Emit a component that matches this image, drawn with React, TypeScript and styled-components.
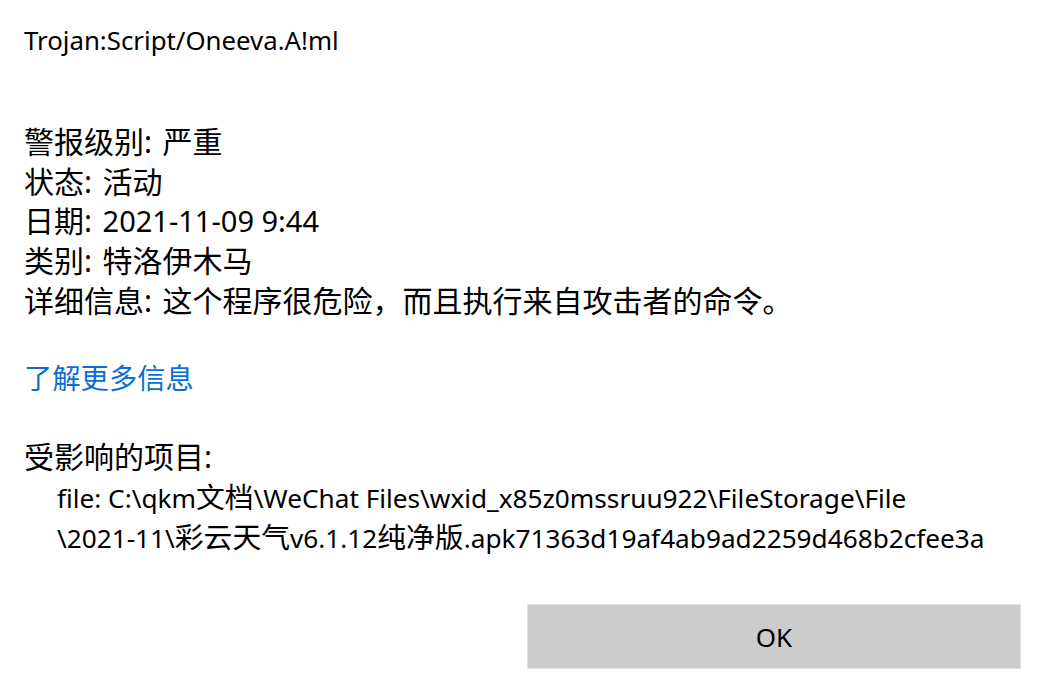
import React from "react";
import styled, { createGlobalStyle } from "styled-components";

const Global = createGlobalStyle`
  html, body { margin: 0; padding: 0; background: #ffffff; }
  body {
    font-family: "Noto Sans", "Noto Sans CJK SC", sans-serif;
    color: #000;
  }
`;

const Dialog = styled.div`
  width: 1047px;
  height: 693px;
  box-sizing: border-box;
  padding: 20px 26px 0 24px;
  display: flex;
  flex-direction: column;
  font-size: 29px;
  line-height: 39.7px;
`;

const Title = styled.div`
  font-family: "Noto Sans", sans-serif;
  font-size: 25.8px;
  line-height: 40px;
`;

const Section = styled.div<{ $gap: number }>`
  margin-top: ${(p) => p.$gap}px;
  display: flex;
  flex-direction: column;
`;

const Row = styled.div`
  font-family: "Noto Sans", "Noto Sans CJK SC", sans-serif;
  white-space: nowrap;
  height: 39.7px;
`;

const Cjk = styled.span`
  font-size: 30px;
`;

const Label = styled.span`
  font-size: 30px;
  margin-right: 3px;
`;

const Link = styled.a`
  color: #0b6fd2;
  text-decoration: none;
  cursor: pointer;
  font-size: 28.3px;
  font-family: "Noto Sans CJK SC", sans-serif;
`;

const Indented = styled.div`
  padding-left: 33px;
  font-size: 26.2px;
  white-space: nowrap;
  height: 39.7px;
`;

const PathCjk = styled.span`
  font-size: 28.8px;
`;

const Footer = styled.div`
  margin-top: 48px;
  display: flex;
  justify-content: flex-end;
`;

const Button = styled.button`
  width: 494px;
  height: 65px;
  background: #cccccc;
  border: 1px solid #e3e3e3;
  font-family: "Noto Sans", sans-serif;
  font-size: 26px;
  color: #000;
  padding: 0;
`;

export default function App() {
  return (
    <>
      <Global />
      <Dialog>
        <Title>Trojan:Script/Oneeva.A!ml</Title>
        <Section $gap={62}>
          <Row><Label>警报级别:</Label> <Cjk>严重</Cjk></Row>
          <Row><Label>状态:</Label> <Cjk>活动</Cjk></Row>
          <Row><Label>日期:</Label> 2021-11-09 9:44</Row>
          <Row><Label>类别:</Label> <Cjk>特洛伊木马</Cjk></Row>
          <Row><Label>详细信息:</Label> <Cjk>这个程序很危险，而且执行来自攻击者的命令。</Cjk></Row>
        </Section>
        <Section $gap={37}>
          <Row>
            <Link>了解更多信息</Link>
          </Row>
        </Section>
        <Section $gap={40}>
          <Row><Cjk>受影响的项目:</Cjk></Row>
          <Indented>file: C:\qkm<PathCjk>文档</PathCjk>\WeChat Files\wxid_x85z0mssruu922\FileStorage\File</Indented>
          <Indented>\2021-11\<PathCjk>彩云天气</PathCjk>v6.1.12<PathCjk>纯净版</PathCjk>.apk71363d19af4ab9ad2259d468b2cfee3a</Indented>
        </Section>
        <Footer>
          <Button>OK</Button>
        </Footer>
      </Dialog>
    </>
  );
}
